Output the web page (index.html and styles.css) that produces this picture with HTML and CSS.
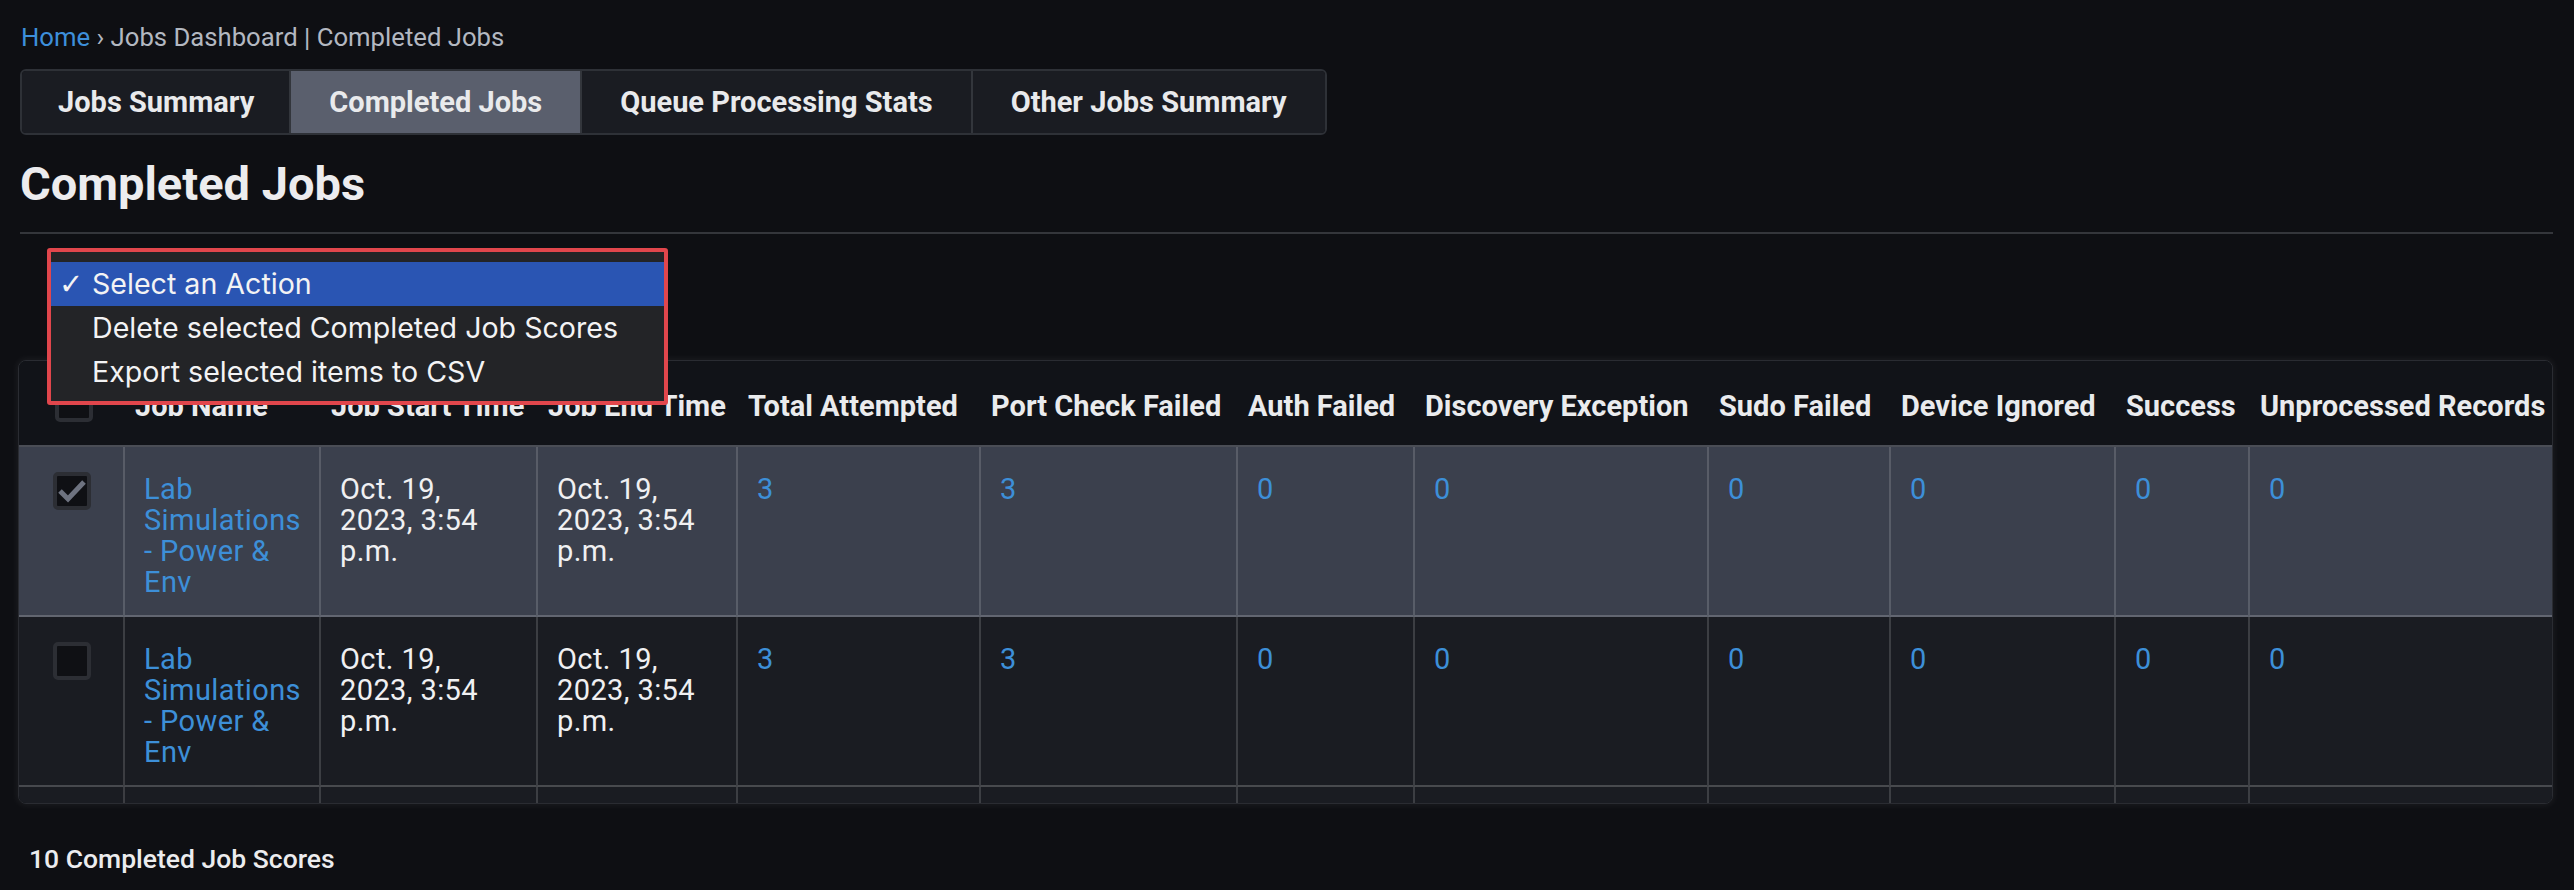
FILE: index.html
```html
<!DOCTYPE html>
<html lang="en">
<head>
<meta charset="utf-8">
<title>Completed Jobs</title>
<link rel="stylesheet" href="styles.css">
</head>
<body>
<div class="page">
  <div class="breadcrumbs"><a class="crumb-link" href="#">Home</a> › Jobs Dashboard | Completed Jobs</div>

  <nav class="tabs">
    <a class="tab tab-first" href="#">Jobs Summary</a>
    <a class="tab active" href="#">Completed Jobs</a>
    <a class="tab" href="#">Queue Processing Stats</a>
    <a class="tab" href="#">Other Jobs Summary</a>
  </nav>

  <h1 class="title">Completed Jobs</h1>
  <div class="rule"></div>

  <div class="actions">
    <div class="action-menu">
      <div class="menu-item highlighted"><span class="tick">✓</span>Select an Action</div>
      <div class="menu-item">Delete selected Completed Job Scores</div>
      <div class="menu-item">Export selected items to CSV</div>
    </div>
  </div>

  <div class="results">
    <table class="result-table">
      <colgroup>
        <col class="w-check"><col class="w-name"><col class="w-start"><col class="w-end">
        <col class="w-total"><col class="w-port"><col class="w-auth"><col class="w-disc">
        <col class="w-sudo"><col class="w-device"><col class="w-success"><col class="w-unproc">
      </colgroup>
      <thead>
        <tr>
          <th class="check-cell"><span class="checkbox"></span></th>
          <th>Job Name</th>
          <th>Job Start Time</th>
          <th>Job End Time</th>
          <th>Total Attempted</th>
          <th>Port Check Failed</th>
          <th>Auth Failed</th>
          <th>Discovery Exception</th>
          <th>Sudo Failed</th>
          <th>Device Ignored</th>
          <th>Success</th>
          <th>Unprocessed Records</th>
        </tr>
      </thead>
      <tbody>
        <tr class="row selected">
          <td class="check-cell"><span class="checkbox checked"><svg viewBox="0 0 30 30" width="30" height="30"><polyline points="3,15 11,23 27,6" fill="none" stroke="#6e7380" stroke-width="5"/></svg></span></td>
          <td><a class="link" href="#">Lab Simulations - Power &amp; Env</a></td>
          <td>Oct. 19, 2023, 3:54 p.m.</td>
          <td>Oct. 19, 2023, 3:54 p.m.</td>
          <td><a class="link" href="#">3</a></td>
          <td><a class="link" href="#">3</a></td>
          <td><a class="link" href="#">0</a></td>
          <td><a class="link" href="#">0</a></td>
          <td><a class="link" href="#">0</a></td>
          <td><a class="link" href="#">0</a></td>
          <td><a class="link" href="#">0</a></td>
          <td><a class="link" href="#">0</a></td>
        </tr>
        <tr class="row">
          <td class="check-cell"><span class="checkbox"></span></td>
          <td><a class="link" href="#">Lab Simulations - Power &amp; Env</a></td>
          <td>Oct. 19, 2023, 3:54 p.m.</td>
          <td>Oct. 19, 2023, 3:54 p.m.</td>
          <td><a class="link" href="#">3</a></td>
          <td><a class="link" href="#">3</a></td>
          <td><a class="link" href="#">0</a></td>
          <td><a class="link" href="#">0</a></td>
          <td><a class="link" href="#">0</a></td>
          <td><a class="link" href="#">0</a></td>
          <td><a class="link" href="#">0</a></td>
          <td><a class="link" href="#">0</a></td>
        </tr>
        <tr class="row">
          <td class="check-cell"></td>
          <td></td><td></td><td></td><td></td><td></td><td></td>
          <td></td><td></td><td></td><td></td><td></td>
        </tr>
      </tbody>
    </table>
  </div>

  <p class="count">10 Completed Job Scores</p>
</div>
</body>
</html>
```

FILE: styles.css
```css
* { box-sizing: border-box; }

html, body {
  margin: 0;
  background: #0e0f13;
  color: #ececee;
  font-family: Roboto, "Liberation Sans", sans-serif;
}

.page {
  padding: 22px 21px 0 20px;
}

a { text-decoration: none; }

.breadcrumbs {
  height: 30px;
  line-height: 30px;
  font-size: 25.7px;
  color: #b3b8c1;
  padding-left: 1px;
}

.crumb-link { color: #3d8fdb; }

.tabs {
  display: flex;
  width: max-content;
  height: 66px;
  margin-top: 17px;
  border: 2px solid #2e3137;
  border-radius: 6px;
  overflow: hidden;
}

.tab {
  display: flex;
  align-items: center;
  padding: 0 38px;
  font-size: 29px;
  font-weight: 700;
  color: #e9eaec;
  background: #1a1c22;
  border-left: 2px solid #33363c;
}

.tab-first {
  border-left: none;
  padding: 0 35px 0 36px;
}

.tab.active { background: #5a5f6d; }

.title {
  margin: 21px 0 0;
  font-size: 47px;
  line-height: 56px;
  font-weight: 700;
  color: #ececee;
}

.rule {
  height: 2px;
  margin-top: 20px;
  background: #34363b;
}

.actions {
  position: relative;
  height: 126px;
}

.action-menu {
  position: absolute;
  z-index: 5;
  top: 14px;
  left: 27px;
  width: 621px;
  padding: 10px 0 7px;
  background: #232427;
  border: 4px solid #e1464c;
  border-radius: 3px;
  font-family: Inter, "Liberation Sans", sans-serif;
}

.menu-item {
  position: relative;
  height: 44px;
  line-height: 44px;
  padding-left: 41px;
  font-size: 28.6px;
  color: #f3f3f4;
  white-space: nowrap;
}

.menu-item.highlighted { background: #2a55b3; }

.tick {
  position: absolute;
  left: 8px;
  top: 0;
  font-family: "DejaVu Sans", sans-serif;
  font-size: 29px;
}

.results {
  margin-left: -2px;
  height: 444px;
  overflow: hidden;
  background: #111318;
  border: 1px solid #2a2c32;
  border-radius: 8px;
  box-shadow: 0 0 6px 2px rgba(255, 255, 255, 0.05);
}

.result-table {
  width: 100%;
  table-layout: fixed;
  border-collapse: separate;
  border-spacing: 0;
}

.w-check { width: 104px; }
.w-name { width: 196px; }
.w-start { width: 217px; }
.w-end { width: 200px; }
.w-total { width: 243px; }
.w-port { width: 257px; }
.w-auth { width: 177px; }
.w-disc { width: 294px; }
.w-sudo { width: 182px; }
.w-device { width: 225px; }
.w-success { width: 134px; }
.w-unproc { width: 304px; }

.result-table th {
  height: 86px;
  padding: 5px 0 0 12px;
  text-align: left;
  vertical-align: middle;
  font-size: 29px;
  font-weight: 700;
  color: #eaebed;
  white-space: nowrap;
  background: #111318;
  border-bottom: 2px solid #4a4d55;
}

.result-table td {
  height: 170px;
  padding: 27px 20px 17px 19px;
  vertical-align: top;
  font-size: 29px;
  line-height: 31px;
  letter-spacing: 0.4px;
  color: #f0f0f2;
  background: #1a1c22;
  border-left: 2px solid rgba(255, 255, 255, 0.15);
  border-bottom: 2px solid rgba(255, 255, 255, 0.2);
}

.row.selected td { background: #3b404d; }

.result-table td.check-cell {
  border-left: none;
  padding-left: 34px;
  padding-top: 25px;
}

.result-table th.check-cell { padding: 0 0 0 36px; }

.checkbox {
  display: block;
  width: 38px;
  height: 38px;
  border: 4px solid #2c2e34;
  border-radius: 5px;
  background: #0f1014;
}

.checkbox svg { display: block; }

.link { color: #3d8fd8; }

.count {
  margin: 40px 0 0 9px;
  font-size: 26.5px;
  line-height: 30px;
  font-weight: 500;
  color: #ececee;
}
```
